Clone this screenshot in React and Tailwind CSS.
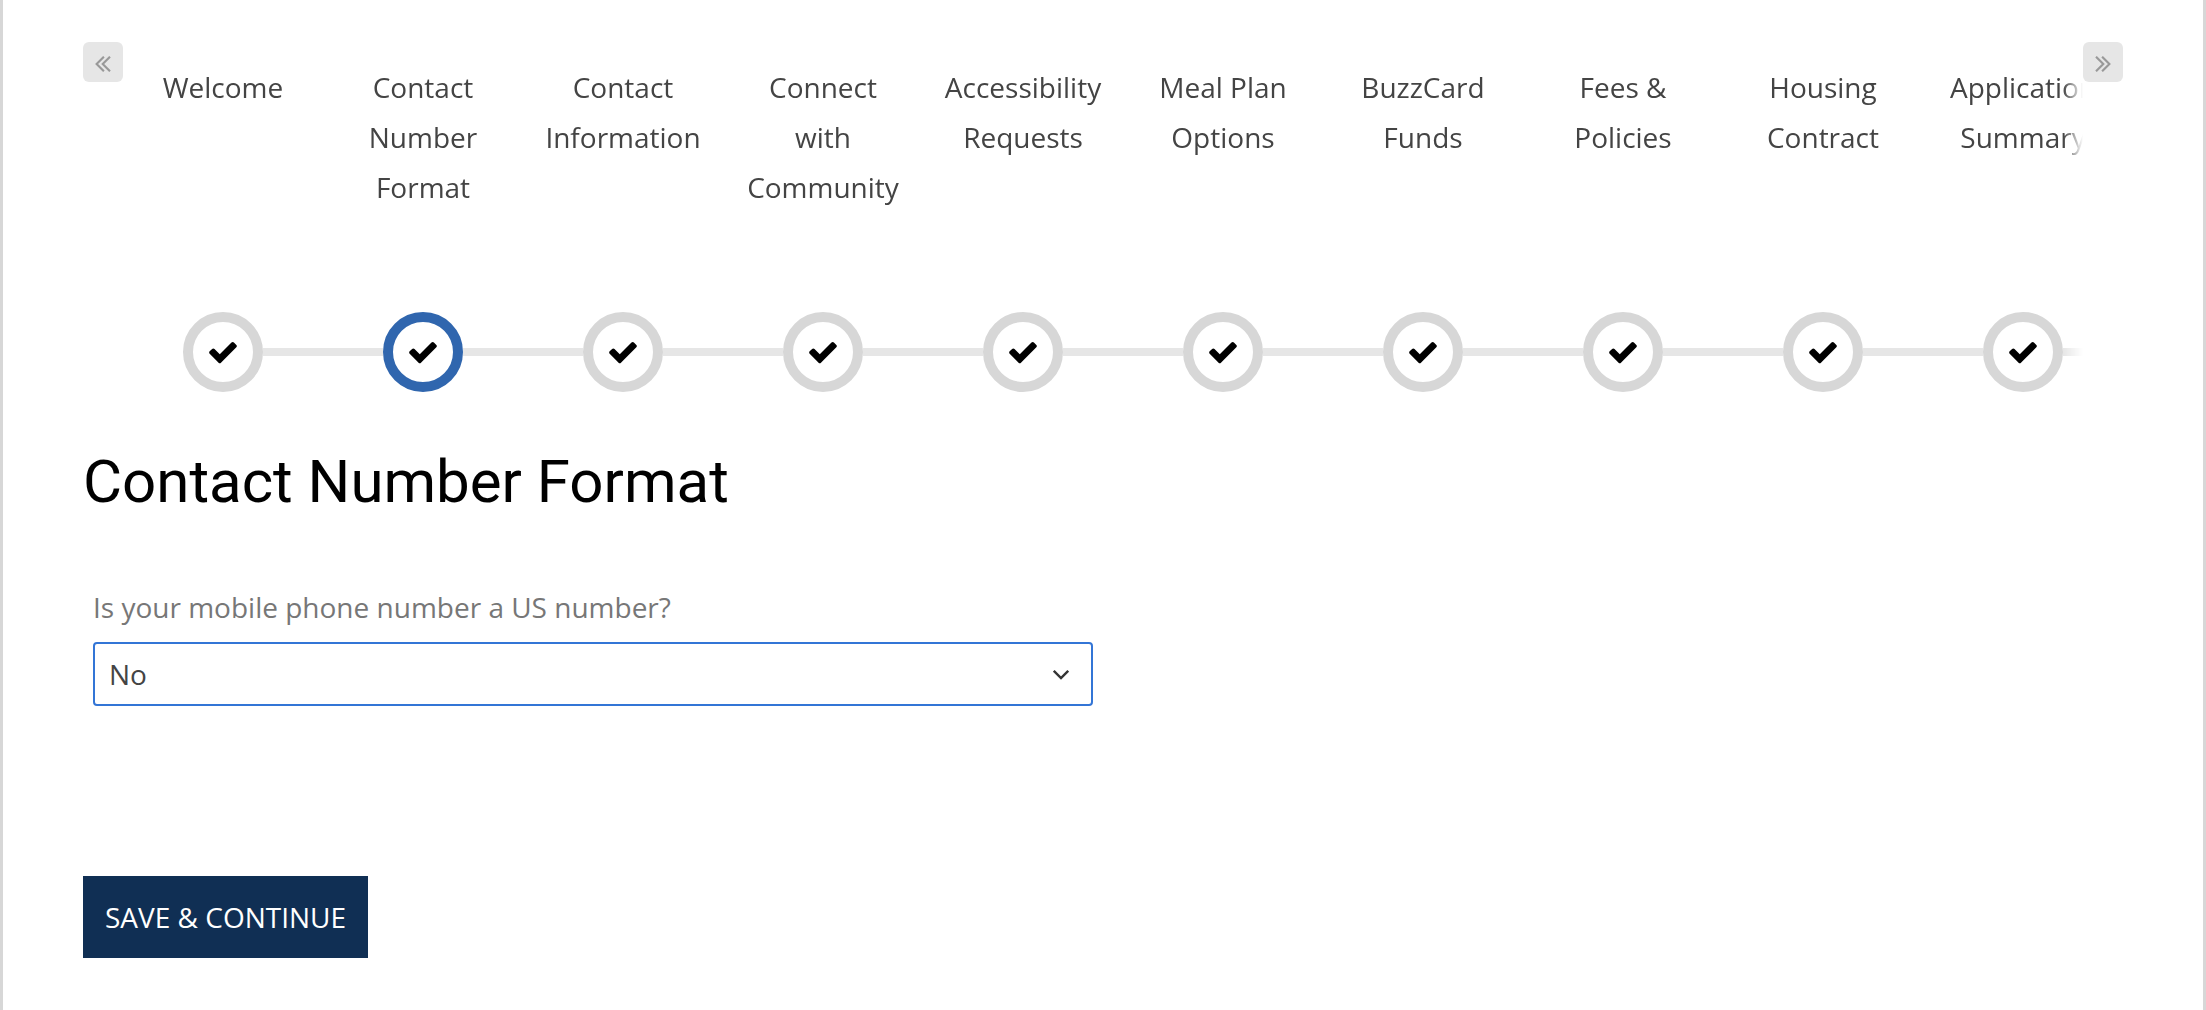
import React, { useState } from "react";

const steps = [
  "Welcome",
  "Contact Number Format",
  "Contact Information",
  "Connect with Community",
  "Accessibility Requests",
  "Meal Plan Options",
  "BuzzCard Funds",
  "Fees & Policies",
  "Housing Contract",
  "Application Summary",
];

const current = 1;

function CheckIcon() {
  return (
    <svg className="size-8" viewBox="0 0 1792 1792" fill="currentColor" aria-hidden="true">
      <path d="M1671 566q0 40-28 68l-724 724-136 136q-28 28-68 28t-68-28l-136-136-362-362q-28-28-28-68t28-68l136-136q28-28 68-28t68 28l294 295 656-657q28-28 68-28t68 28l136 136q28 28 28 68z" />
    </svg>
  );
}

function DoubleChevron({ direction }) {
  return (
    <svg
      className="h-4 w-4"
      viewBox="0 0 16 16"
      fill="none"
      stroke="currentColor"
      strokeWidth="2.1"
      aria-hidden="true"
    >
      <path
        d={
          direction === "left"
            ? "M8.9 0.7L1.6 8L8.9 15.3M15 0.7L7.7 8L15 15.3"
            : "M7.1 0.7L14.4 8L7.1 15.3M1 0.7L8.3 8L1 15.3"
        }
      />
    </svg>
  );
}

function ScrollButton({ direction, label }) {
  return (
    <button
      type="button"
      aria-label={label}
      className="flex size-10 shrink-0 items-center justify-center rounded-md bg-[#e6e6e6] pt-1 text-[#999999]"
    >
      <DoubleChevron direction={direction} />
    </button>
  );
}

function Step({ label, index }) {
  const active = index === current;
  return (
    <li className="flex w-[200px] shrink-0 flex-col">
      <a
        href="#step"
        aria-current={active ? "step" : undefined}
        className="flex flex-1 flex-col text-center"
      >
        <span className="mb-[100px] flex-1 px-5">{label}</span>
        <span className="flex items-center">
          <span className={index === 0 ? "h-2 flex-1" : "h-2 flex-1 bg-[#e6e6e6]"} />
          <span
            className={
              active
                ? "flex size-20 items-center justify-center rounded-full border-10 border-[#3066ae] text-black"
                : "flex size-20 items-center justify-center rounded-full border-10 border-[#d7d7d7] text-black"
            }
          >
            <CheckIcon />
          </span>
          <span className="h-2 flex-1 bg-[#e6e6e6]" />
        </span>
      </a>
    </li>
  );
}

export default function App() {
  const [answer, setAnswer] = useState("No");
  return (
    <main className="min-h-screen border-x-3 border-[#d7d7d7] bg-white px-20 pt-[42px] pb-[52px] font-['Open_Sans',sans-serif] text-[28px] leading-[50px] text-[#444444]">
      <nav aria-label="Application steps" className="flex items-start">
        <ScrollButton direction="left" label="Scroll left" />
        <ol className="flex min-w-0 flex-1 overflow-hidden pt-5 [mask-image:linear-gradient(to_left,transparent,black_20px)]">
          {steps.map((label, index) => (
            <Step key={label} label={label} index={index} />
          ))}
        </ol>
        <ScrollButton direction="right" label="Scroll right" />
      </nav>

      <h1 className="mt-[50px] font-['Roboto',sans-serif] text-[60px] leading-[80px] text-black">
        Contact Number Format
      </h1>

      <form onSubmit={(event) => event.preventDefault()}>
        <div className="mt-[60px] w-1/2 px-[10px]">
          <label htmlFor="us-number" className="block text-[#777777]">
            Is your mobile phone number a US number?
          </label>
          <div className="relative mt-[10px]">
            <select
              id="us-number"
              value={answer}
              onChange={(event) => setAnswer(event.target.value)}
              className="block h-16 w-full appearance-none rounded-sm border-2 border-[#3375d6] bg-white pr-14 pl-3.5 leading-[50px] text-[#444444] outline-none"
            >
              <option>No</option>
              <option>Yes</option>
            </select>
            <svg
              className="pointer-events-none absolute top-6 right-6 size-4 text-[#333333]"
              viewBox="0 0 16 16"
              fill="none"
              stroke="currentColor"
              strokeWidth="2.4"
              aria-hidden="true"
            >
              <path d="M0.8 4.8L8 12L15.2 4.8" />
            </svg>
          </div>
        </div>

        <button type="submit" className="mt-[170px] block bg-[#102f54] px-[22px] py-4 text-white">
          SAVE &amp; CONTINUE
        </button>
      </form>
    </main>
  );
}
